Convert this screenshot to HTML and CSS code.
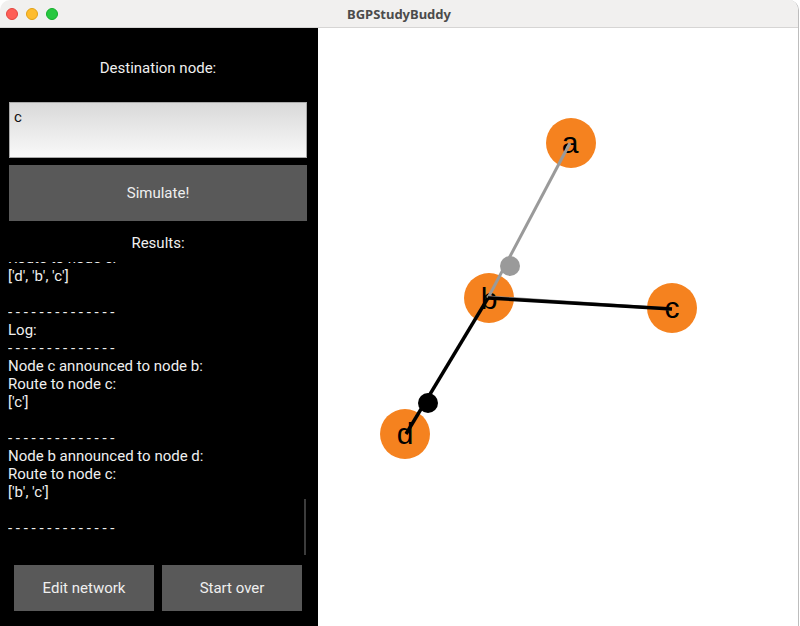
FILE: index.html
```html
<!DOCTYPE html>
<html>
<head>
<meta charset="utf-8">
<title>BGPStudyBuddy</title>
<link rel="stylesheet" href="styles.css">
</head>
<body>
<div class="window">
  <div class="titlebar">
    <div class="lights">
      <span class="light red"></span>
      <span class="light yellow"></span>
      <span class="light green"></span>
    </div>
    <div class="title">BGPStudyBuddy</div>
  </div>
  <div class="content">
    <div class="sidebar">
      <div class="dest-label">Destination node:</div>
      <div class="text-input">c</div>
      <div class="btn simulate">Simulate!</div>
      <div class="results-label">Results:</div>
      <div class="results">
        <div class="results-inner">
          <div class="line">Route to node c:</div>
          <div class="line">['d', 'b', 'c']</div>
          <div class="line"></div>
          <div class="line">- - - - - - - - - - - - - -</div>
          <div class="line">Log:</div>
          <div class="line">- - - - - - - - - - - - - -</div>
          <div class="line">Node c announced to node b:</div>
          <div class="line">Route to node c:</div>
          <div class="line">['c']</div>
          <div class="line"></div>
          <div class="line">- - - - - - - - - - - - - -</div>
          <div class="line">Node b announced to node d:</div>
          <div class="line">Route to node c:</div>
          <div class="line">['b', 'c']</div>
          <div class="line"></div>
          <div class="line">- - - - - - - - - - - - - -</div>
        </div>
        <div class="scrollbar"></div>
      </div>
      <div class="actions">
        <div class="btn action">Edit network</div>
        <div class="btn action">Start over</div>
      </div>
    </div>
    <div class="canvas">
      <svg class="graph" width="480" height="598" viewBox="0 0 480 598">
        <g fill="#f5821f">
          <circle cx="253" cy="115" r="25"/>
          <circle cx="171" cy="270" r="25"/>
          <circle cx="354" cy="280" r="25"/>
          <circle cx="87" cy="406" r="25"/>
        </g>
        <g class="labels" text-anchor="middle">
          <text x="252" y="125">a</text>
          <text x="171" y="281">b</text>
          <text x="354" y="290">c</text>
          <text x="87" y="416">d</text>
        </g>
        <line x1="252" y1="115" x2="170" y2="270" stroke="#9a9a9a" stroke-width="3"/>
        <line x1="169" y1="269" x2="353" y2="281" stroke="#8a8a8a" stroke-width="3"/>
        <line x1="170" y1="270" x2="354" y2="281" stroke="#000" stroke-width="3.4"/>
        <line x1="170" y1="270" x2="88" y2="406" stroke="#000" stroke-width="3.4"/>
        <circle cx="192" cy="238" r="10" fill="#9a9a9a"/>
        <circle cx="110" cy="375" r="10" fill="#000"/>
      </svg>
    </div>
  </div>
</div>
</body>
</html>
```

FILE: styles.css
```css
html, body {
  margin: 0;
  padding: 0;
  background: #ffffff;
}

.window {
  width: 798px;
  height: 626px;
  border-right: 1px solid #bdbdbd;
  border-radius: 10px 10px 0 0;
  overflow: hidden;
  display: flex;
  flex-direction: column;
}

.titlebar {
  height: 27px;
  flex: 0 0 27px;
  background: #f1f0ef;
  border-bottom: 1px solid #d6d5d4;
  display: flex;
  align-items: center;
  position: relative;
}

.lights {
  display: flex;
  gap: 8px;
  padding-left: 6px;
  padding-top: 1px;
}

.light {
  width: 12px;
  height: 12px;
  border-radius: 50%;
  box-sizing: border-box;
}

.red { background: #fe5f57; border: 1px solid #e2463f; }
.yellow { background: #febc2e; border: 1px solid #e1a116; }
.green { background: #28c840; border: 1px solid #14ae2b; }

.title {
  position: absolute;
  left: 0;
  right: 0;
  top: 0;
  line-height: 28px;
  text-align: center;
  font-family: "Noto Sans", "Liberation Sans", sans-serif;
  font-weight: bold;
  font-size: 13px;
  color: #4b4b4b;
}

.content {
  flex: 1;
  display: flex;
}

.sidebar {
  width: 318px;
  flex: 0 0 318px;
  background: #000;
  display: flex;
  flex-direction: column;
  padding: 0 11px 0 9px;
  box-sizing: border-box;
  font-family: Roboto, "Liberation Sans", sans-serif;
  font-size: 15px;
  color: #efefef;
}

.dest-label {
  margin-top: 31px;
  line-height: 18px;
  text-align: center;
}

.text-input {
  margin-top: 25px;
  height: 56px;
  box-sizing: border-box;
  border: 1px solid #a9a9a9;
  background: linear-gradient(#d9d9d9, #f9f9f9);
  color: #111;
  padding: 5px 4px;
  line-height: 18px;
}

.btn {
  background: #595959;
  color: #efefef;
  display: flex;
  align-items: center;
  justify-content: center;
}

.simulate {
  margin-top: 7px;
  height: 56px;
}

.results-label {
  margin-top: 13px;
  line-height: 18px;
  text-align: center;
}

.results {
  margin-top: 10px;
  margin-left: -1px;
  height: 293px;
  overflow: hidden;
  position: relative;
}

.results-inner {
  margin-top: -13px;
}

.line {
  height: 18px;
  line-height: 18px;
  white-space: pre;
}

.scrollbar {
  position: absolute;
  right: 1px;
  bottom: 0;
  width: 2px;
  height: 56px;
  background: #3c3c3c;
}

.actions {
  margin-top: 10px;
  display: flex;
  gap: 8px;
  padding-left: 5px;
}

.action {
  width: 140px;
  height: 46px;
}

.canvas {
  flex: 1;
  background: #fff;
}

.graph {
  display: block;
}

.labels text {
  font-family: "Liberation Sans", Arial, sans-serif;
  font-size: 30px;
  fill: #000;
}
```
